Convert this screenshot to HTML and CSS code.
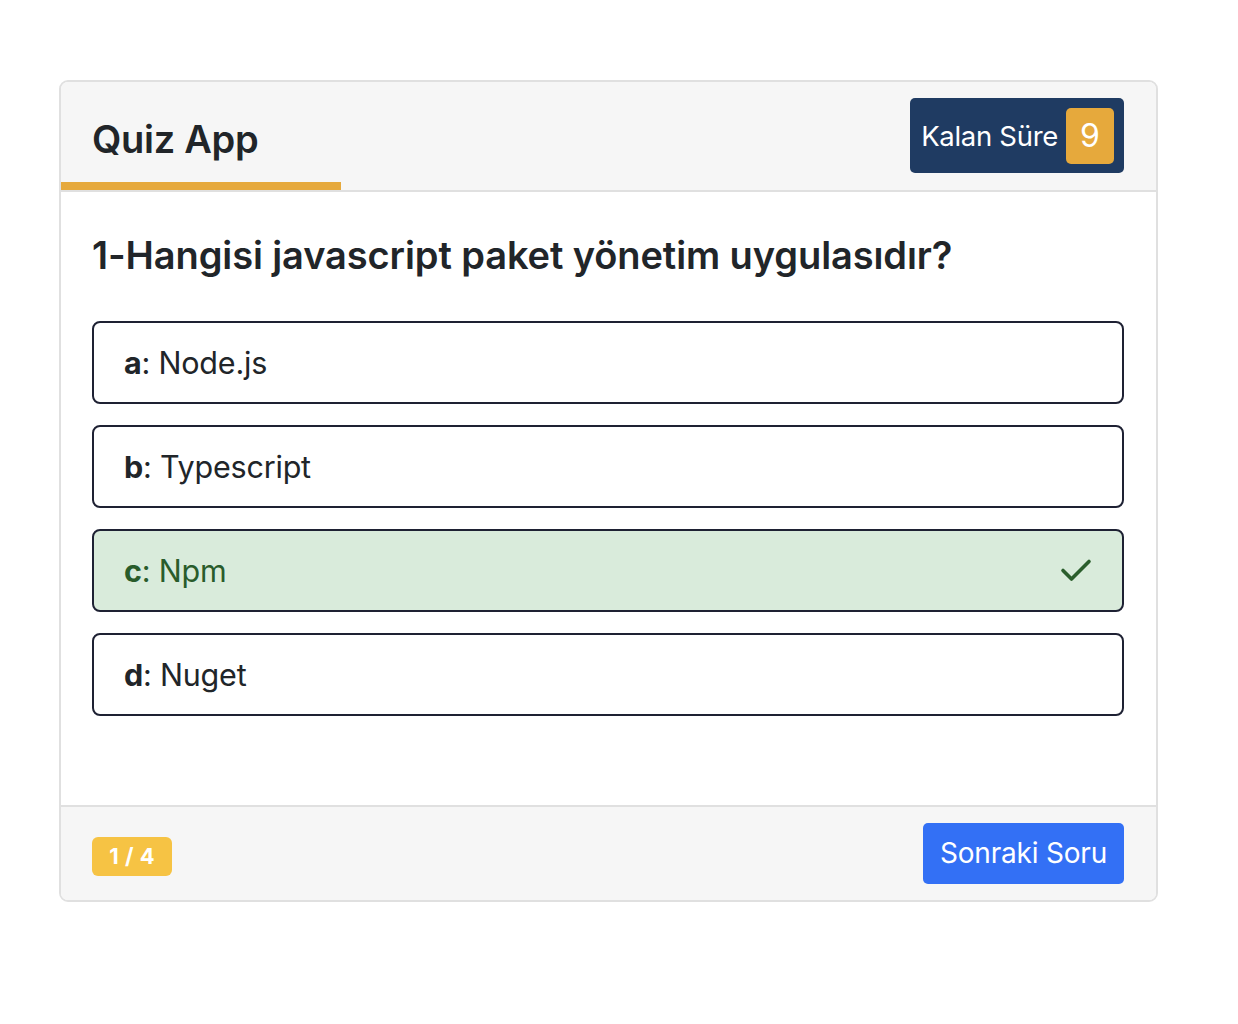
FILE: index.html
```html
<!DOCTYPE html>
<html lang="tr">
<head>
<meta charset="utf-8">
<title>Quiz App</title>
<link rel="stylesheet" href="styles.css">
</head>
<body>
<div class="page">
  <div class="card">
    <div class="card-header">
      <div class="header-row">
        <h1 class="title">Quiz App</h1>
        <div class="timer">
          <span class="timer-label">Kalan Süre</span>
          <span class="timer-value">9</span>
        </div>
      </div>
      <div class="progress"></div>
    </div>
    <div class="card-body">
      <h2 class="question">1-Hangisi javascript paket yönetim uygulasıdır?</h2>
      <div class="options">
        <div class="option"><span><b>a</b>: Node.js</span></div>
        <div class="option"><span><b>b</b>: Typescript</span></div>
        <div class="option correct"><span><b>c</b>: Npm</span>
          <svg class="check" width="32" height="24" viewBox="0 0 32 24"><path d="M3 12.5 L11.5 21 L29 3.5" fill="none" stroke="#2b5e2c" stroke-width="3.6" stroke-linecap="round" stroke-linejoin="round"/></svg>
        </div>
        <div class="option"><span><b>d</b>: Nuget</span></div>
      </div>
    </div>
    <div class="card-footer">
      <span class="counter">1 / 4</span>
      <button class="next">Sonraki Soru</button>
    </div>
  </div>
</div>
</body>
</html>
```

FILE: styles.css
```css
* { box-sizing: border-box; }
body {
  margin: 0;
  background: #ffffff;
  font-family: Inter, "Noto Sans", "Liberation Sans", sans-serif;
  color: #212529;
}
.page {
  padding: 80px 0 0 59px;
}
.card {
  width: 1099px;
  border: 2px solid #e0e0e0;
  border-radius: 9px;
  overflow: hidden;
  background: #fff;
}
.card-header {
  background: #f6f6f6;
  border-bottom: 2px solid #e0e0e0;
}
.header-row {
  display: flex;
  justify-content: space-between;
  align-items: center;
  padding: 16px 32px 9px 31px;
}
.title {
  margin: 0;
  font-size: 38px;
  font-weight: 600;
  letter-spacing: -0.3px;
  line-height: 1;
  padding-top: 6px;
}
.timer {
  display: flex;
  align-items: center;
  height: 75px;
  background: #1f3b62;
  border-radius: 5px;
  padding: 0 10px 0 11px;
  gap: 8px;
}
.timer-label {
  color: #fff;
  font-size: 27.5px;
  letter-spacing: -0.3px;
}
.timer-value {
  display: flex;
  align-items: center;
  justify-content: center;
  width: 48px;
  height: 56px;
  background: #e6a93c;
  border-radius: 5px;
  color: #fff;
  font-size: 32px;
}
.progress {
  width: 280px;
  height: 8px;
  background: #e6a93c;
}
.card-body {
  padding: 41px 32px 89px 31px;
}
.question {
  margin: 0 0 42px;
  font-size: 38px;
  font-weight: 600;
  letter-spacing: -0.1px;
  line-height: 1.2;
}
.options {
  display: flex;
  flex-direction: column;
  gap: 21px;
}
.option {
  display: flex;
  justify-content: space-between;
  align-items: center;
  height: 83px;
  border: 2px solid #1e2133;
  border-radius: 8px;
  padding: 0 30px 0 30px;
  font-size: 30.5px;
  letter-spacing: -0.2px;
  color: #212529;
}
.option b { font-weight: 700; }
.option.correct {
  background: #d9ebdb;
  color: #295c2b;
}
.check { display: block; }
.card-footer {
  display: flex;
  justify-content: space-between;
  align-items: center;
  background: #f6f6f6;
  border-top: 2px solid #e0e0e0;
  padding: 16px 32px 16px 31px;
}
.counter {
  display: inline-flex;
  align-items: center;
  justify-content: center;
  width: 80px;
  height: 39px;
  margin-top: 6px;
  background: #f6c344;
  border-radius: 6px;
  color: #fff;
  font-weight: 700;
  font-size: 22px;
  word-spacing: 1px;
}
.next {
  height: 61px;
  width: 201px;
  background: #3370f5;
  border: none;
  border-radius: 5px;
  color: #fff;
  font-family: inherit;
  font-size: 28px;
  letter-spacing: -0.2px;
}
```
